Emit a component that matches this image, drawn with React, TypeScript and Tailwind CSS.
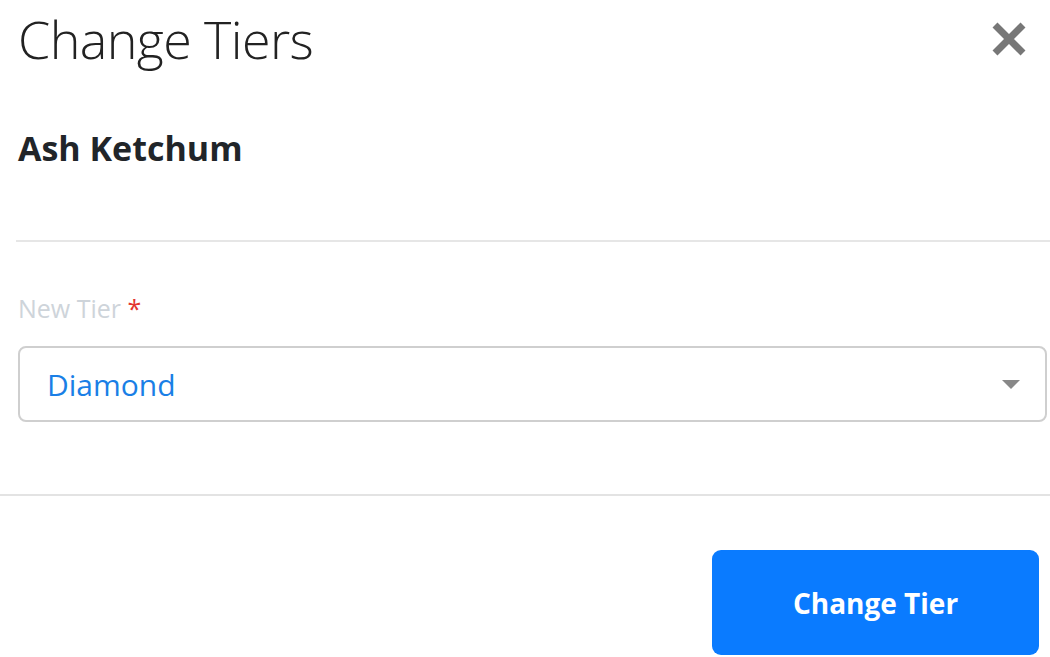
import React from "react";

export default function App() {
  return (
    <div
      className="w-[1050px] h-[657px] bg-white overflow-hidden relative"
      style={{ fontFamily: '"Open Sans", "Noto Sans", sans-serif' }}
    >
      {/* Header */}
      <div className="flex items-start justify-between h-[90px]">
        <h1 className="pl-[18px] text-[52px] leading-[78px] font-light text-[#222] tracking-[-0.6px]">
          Change Tiers
        </h1>
        <button className="mt-[22px] mr-[24px] w-[34px] h-[34px] flex items-center justify-center">
          <svg width="34" height="34" viewBox="0 0 34 34">
            <path d="M3 3 L31 31 M31 3 L3 31" stroke="#777" strokeWidth="7" strokeLinecap="butt" />
          </svg>
        </button>
      </div>

      {/* Member name */}
      <div className="pl-[18px] h-[150px] pt-[36px]">
        <div className="text-[34px] font-bold text-[#212529] leading-[44px]">Ash Ketchum</div>
      </div>

      <div className="ml-[16px] h-[2px] bg-[#e6e6e6]" />

      {/* Form */}
      <div className="pl-[18px] pr-[3px] pt-[50px] h-[252px]">
        <label className="block text-[25px] leading-[32px] text-[#ced4da]">
          New Tier <span className="text-[#e3342f]">*</span>
        </label>
        <div className="mt-[22px] h-[76px] border-2 border-[#cfcfcf] rounded-[8px] flex items-center justify-between pl-[27px] pr-[25px]">
          <span className="text-[30px] text-[#1a7fe6]">Diamond</span>
          <svg width="18" height="9" viewBox="0 0 18 9">
            <path d="M0 0 L18 0 L9 9 Z" fill="#888" />
          </svg>
        </div>
      </div>

      <div className="h-[2px] bg-[#e3e3e3]" />

      {/* Footer */}
      <div className="flex justify-end pr-[11px] pt-[54px]">
        <button className="w-[327px] h-[105px] rounded-[9px] bg-[#0a7bff] text-white text-[28px] font-bold">
          Change Tier
        </button>
      </div>
    </div>
  );
}
